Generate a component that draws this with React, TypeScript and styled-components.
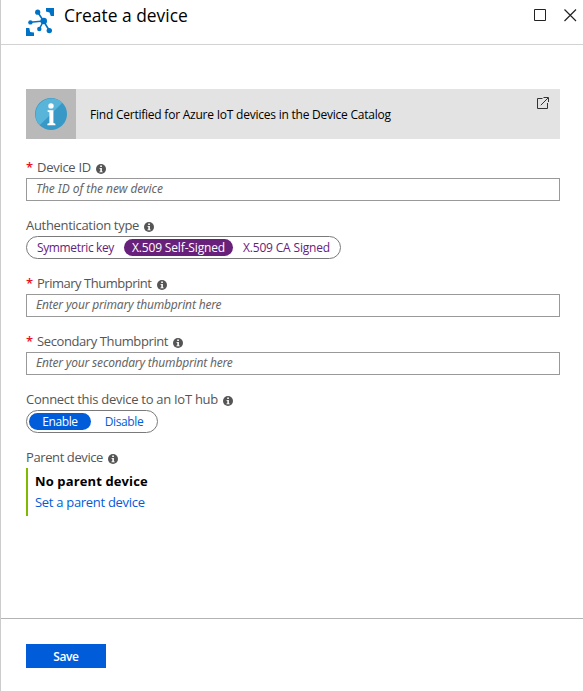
import React from 'react';
import styled, { createGlobalStyle } from 'styled-components';

const GlobalStyle = createGlobalStyle`
  * { box-sizing: border-box; }
  body { margin: 0; background: #fff; }
`;

const Blade = styled.main`
  width: 583px;
  height: 691px;
  display: flex;
  flex-direction: column;
  border-left: 1px solid #ccc;
  background: #fff;
  color: #000;
  font-family: 'Open Sans', 'Noto Sans', sans-serif;
  overflow: hidden;
`;

const Header = styled.header`
  height: 45px;
  flex: none;
  display: flex;
  align-items: flex-start;
  padding: 8px 6px 0 25px;
  border-bottom: 1px solid #d2d2d2;
`;

const Title = styled.h1`
  flex: 1;
  margin: -5px 0 0 10px;
  font-size: 17.4px;
  line-height: 24px;
  font-weight: 450;
`;

const WindowActions = styled.div`
  display: flex;
  gap: 17px;
  padding-top: 1px;
`;

const Content = styled.div`
  flex: 1;
  padding: 44px 23px 0 25px;
`;

const Banner = styled.div`
  height: 50px;
  display: flex;
  align-items: center;
  margin-bottom: 18px;
  background: #e3e3e3;
`;

const BannerIcon = styled.div`
  width: 50px;
  height: 50px;
  display: grid;
  place-items: center;
  background: #b9b9b9;
`;

const BannerText = styled.span`
  flex: 1;
  padding-left: 14px;
  padding-top: 1px;
  font-size: 12px;
  letter-spacing: -0.23px;
`;

const ExternalLink = styled.div`
  align-self: flex-start;
  display: flex;
  padding: 8px 11px 0 0;
`;

const Field = styled.div`
  height: 58px;
`;

const Label = styled.label<{ $tracking: number }>`
  height: 21px;
  display: flex;
  align-items: center;
  font-size: 13px;
  line-height: 21px;
  letter-spacing: ${(p) => p.$tracking}px;
  color: #555;
  white-space: nowrap;

  svg {
    margin: 3px 0 0 5px;
  }
`;

const Required = styled.span`
  width: 11px;
  color: #e81123;
  font-size: 13px;
  font-weight: 600;
`;

const Input = styled.input<{ $tracking: number }>`
  display: block;
  width: 534px;
  height: 23px;
  padding: 0 9px 2px;
  border: 1px solid #999;
  border-radius: 0;
  background: #fff;
  font-family: 'Noto Sans', sans-serif;
  font-size: 12px;
  letter-spacing: ${(p) => p.$tracking}px;

  &::placeholder {
    color: #666;
    font-style: italic;
    opacity: 1;
  }
`;

const OptionGroup = styled.div`
  width: max-content;
  height: 23px;
  display: flex;
  gap: 2px;
  padding: 2px;
  border: 1px solid #7a7a7a;
  border-radius: 12px;
`;

const Option = styled.button<{
  $accent: string;
  $selected?: boolean;
  $width: number;
  $tracking: number;
}>`
  width: ${(p) => p.$width}px;
  height: 17px;
  padding: 0;
  border: 0;
  border-radius: 9px;
  background: ${(p) => (p.$selected ? p.$accent : 'transparent')};
  color: ${(p) => (p.$selected ? '#fff' : p.$accent)};
  font-family: inherit;
  font-size: 12px;
  line-height: 17px;
  letter-spacing: ${(p) => p.$tracking}px;
  white-space: nowrap;
`;

const ParentCard = styled.div`
  height: 48px;
  padding: 2px 0 0 7px;
  border-left: 2px solid #7fba00;
  font-size: 13px;
  line-height: 22px;
`;

const ParentName = styled.div`
  font-weight: 700;
  letter-spacing: 0.12px;
`;

const ParentLink = styled.a`
  display: block;
  line-height: 21px;
  color: #015cda;
  letter-spacing: -0.3px;
`;

const Footer = styled.footer`
  height: 73px;
  flex: none;
  padding: 25px 25px 0;
  border-top: 1px solid #b4b4b4;
`;

const SaveButton = styled.button`
  display: block;
  width: 80px;
  height: 24px;
  padding: 1px 0 0;
  border: 0;
  background: #015cda;
  color: #fff;
  font-family: inherit;
  font-size: 12px;
  font-weight: 600;
  letter-spacing: -0.4px;
`;

const PURPLE = '#68217a';
const BLUE = '#015cda';

const DeviceIcon = () => (
  <svg width="28" height="28" viewBox="0 0 28 28" fill="#0072c6">
    <path d="M20 0H28v8h-3.2L23.5 4.6 20 3.4zM0 20h3.4v4.6H8V28H0z" />
    <path d="M3 20.5 4.2 24 7.5 25H3z" />
    <path
      d="M17.5 13 11.8 4.3M17.5 13 4.5 14.3M17.5 13 13.3 21M17.5 13 23.3 22.5"
      stroke="#0072c6"
      strokeWidth="1.6"
    />
    <circle cx="17.7" cy="13" r="3.3" />
    <circle cx="11.7" cy="4.2" r="2.6" />
    <circle cx="4.4" cy="14.4" r="2.2" />
    <circle cx="13.3" cy="21" r="2.2" />
    <circle cx="23.3" cy="22.6" r="2.7" />
  </svg>
);

const InfoIcon = () => (
  <svg width="10" height="10" viewBox="0 0 10 10">
    <circle cx="5" cy="5" r="5" fill="#555" />
    <path d="M4.2 1.5h1.7v1.4H4.2zM3.5 4h2.4v3.4h.8v.9H3.4v-.9h.9V4.8h-.8z" fill="#fff" />
  </svg>
);

const InfoBadge = () => (
  <svg width="32" height="32" viewBox="0 0 32 32">
    <circle cx="16" cy="16" r="16" fill="#3999c6" />
    <path d="M4.7 27.3A16 16 0 0 1 27.3 4.7z" fill="#59b4d9" />
    <circle cx="16" cy="7.9" r="2.7" fill="#fff" />
    <path d="M12.6 12.2h5.8v12.9l2 .6v1.5h-8v-1.5l2-.6V14.3l-1.8-.6z" fill="#fff" />
  </svg>
);

type LabelTextProps = { text: string; tracking: number; required?: boolean };

const LabelText = ({ text, tracking, required }: LabelTextProps) => (
  <Label $tracking={tracking}>
    {required && <Required>*</Required>}
    {text}
    <InfoIcon />
  </Label>
);

export default function App() {
  return (
    <>
      <GlobalStyle />
      <Blade>
        <Header>
          <DeviceIcon />
          <Title>Create a device</Title>
          <WindowActions>
            <svg width="13" height="13" fill="none" stroke="#222">
              <path d="M.5.5h11v11H.5z" />
            </svg>
            <svg width="13" height="13" fill="none" stroke="#222" strokeWidth="1.2">
              <path d="m.5.5 11.5 11.5M12 .5.5 12" />
            </svg>
          </WindowActions>
        </Header>

        <Content>
          <Banner>
            <BannerIcon>
              <InfoBadge />
            </BannerIcon>
            <BannerText>Find Certified for Azure IoT devices in the Device Catalog</BannerText>
            <ExternalLink>
              <svg width="12" height="12" fill="none" stroke="#333">
                <path d="M5.5 1.5h-5v10h10V6M6.5.5h5V5M11 1 3.8 8.2" />
              </svg>
            </ExternalLink>
          </Banner>

          <Field>
            <LabelText text="Device ID" tracking={-0.28} required />
            <Input placeholder="The ID of the new device" $tracking={-0.05} />
          </Field>

          <Field>
            <LabelText text="Authentication type" tracking={-0.31} />
            <OptionGroup>
              <Option $accent={PURPLE} $width={93} $tracking={-0.36}>Symmetric key</Option>
              <Option $accent={PURPLE} $width={109} $tracking={-0.15} $selected>X.509 Self-Signed</Option>
              <Option $accent={PURPLE} $width={103} $tracking={-0.17}>X.509 CA Signed</Option>
            </OptionGroup>
          </Field>

          <Field>
            <LabelText text="Primary Thumbprint" tracking={-0.48} required />
            <Input placeholder="Enter your primary thumbprint here" $tracking={-0.18} />
          </Field>

          <Field>
            <LabelText text="Secondary Thumbprint" tracking={-0.4} required />
            <Input placeholder="Enter your secondary thumbprint here" $tracking={-0.19} />
          </Field>

          <Field>
            <LabelText text="Connect this device to an IoT hub" tracking={-0.28} />
            <OptionGroup>
              <Option $accent={BLUE} $width={62} $tracking={-0.4} $selected>Enable</Option>
              <Option $accent={BLUE} $width={62} $tracking={-0.4}>Disable</Option>
            </OptionGroup>
          </Field>

          <LabelText text="Parent device" tracking={-0.4} />
          <ParentCard>
            <ParentName>No parent device</ParentName>
            <ParentLink>Set a parent device</ParentLink>
          </ParentCard>
        </Content>

        <Footer>
          <SaveButton>Save</SaveButton>
        </Footer>
      </Blade>
    </>
  );
}
